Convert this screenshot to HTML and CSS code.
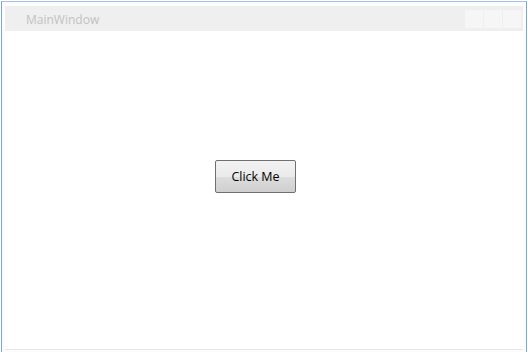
FILE: index.html
```html
<!DOCTYPE html>
<html>
<head>
<meta charset="utf-8">
<link rel="stylesheet" href="styles.css">
</head>
<body>
<div class="window">
  <div class="frame">
    <div class="titlebar">
      <span class="title">MainWindow</span>
      <div class="controls">
        <span class="ctl"></span><span class="ctl"></span><span class="ctl"></span>
      </div>
    </div>
    <div class="client">
      <button class="btn">Click Me</button>
    </div>
  </div>
</div>
</body>
</html>
```
FILE: styles.css
```css
html, body {
  margin: 0;
  padding: 0;
  width: 528px;
  height: 352px;
  background: #ffffff;
  overflow: hidden;
}
.window {
  box-sizing: border-box;
  width: 526px;
  height: 351px;
  margin: 1px 0 0 1px;
  border-left: 1px solid #7fa4dc;
  border-right: 1px solid #7fa4dc;
  border-top: 1px solid #a9c0e6;
  padding: 4px 3px 0 3px;
  background: #fbfcfe;
}
.frame {
  display: flex;
  flex-direction: column;
  height: 100%;
}
.titlebar {
  height: 25px;
  flex: none;
  background: #efefef;
  display: flex;
  align-items: center;
  justify-content: space-between;
  padding-left: 21px;
}
.title {
  font-family: "Open Sans", "DejaVu Sans", sans-serif;
  font-size: 12px;
  color: #c2c2c2;
  padding-top: 1px;
}
.controls {
  display: flex;
  align-self: stretch;
  gap: 1px;
  padding: 4px 0 3px 0;
  margin-right: 2px;
}
.ctl {
  width: 18px;
  background: #f6f6f6;
}
.client {
  flex: 1;
  background: #ffffff;
  border-bottom: 1px solid #e6e6e6;
  position: relative;
  margin-bottom: 2px;
}
.btn {
  position: absolute;
  left: 210px;
  top: 129px;
  width: 81px;
  height: 33px;
  box-sizing: border-box;
  border: 1px solid #707070;
  border-radius: 2px;
  background: linear-gradient(#f2f2f2 0%, #ebebeb 50%, #dddddd 51%, #cfcfcf 100%);
  font-family: "Open Sans", "DejaVu Sans", sans-serif;
  font-size: 12.5px;
  color: #000;
  padding: 0;
}
```
